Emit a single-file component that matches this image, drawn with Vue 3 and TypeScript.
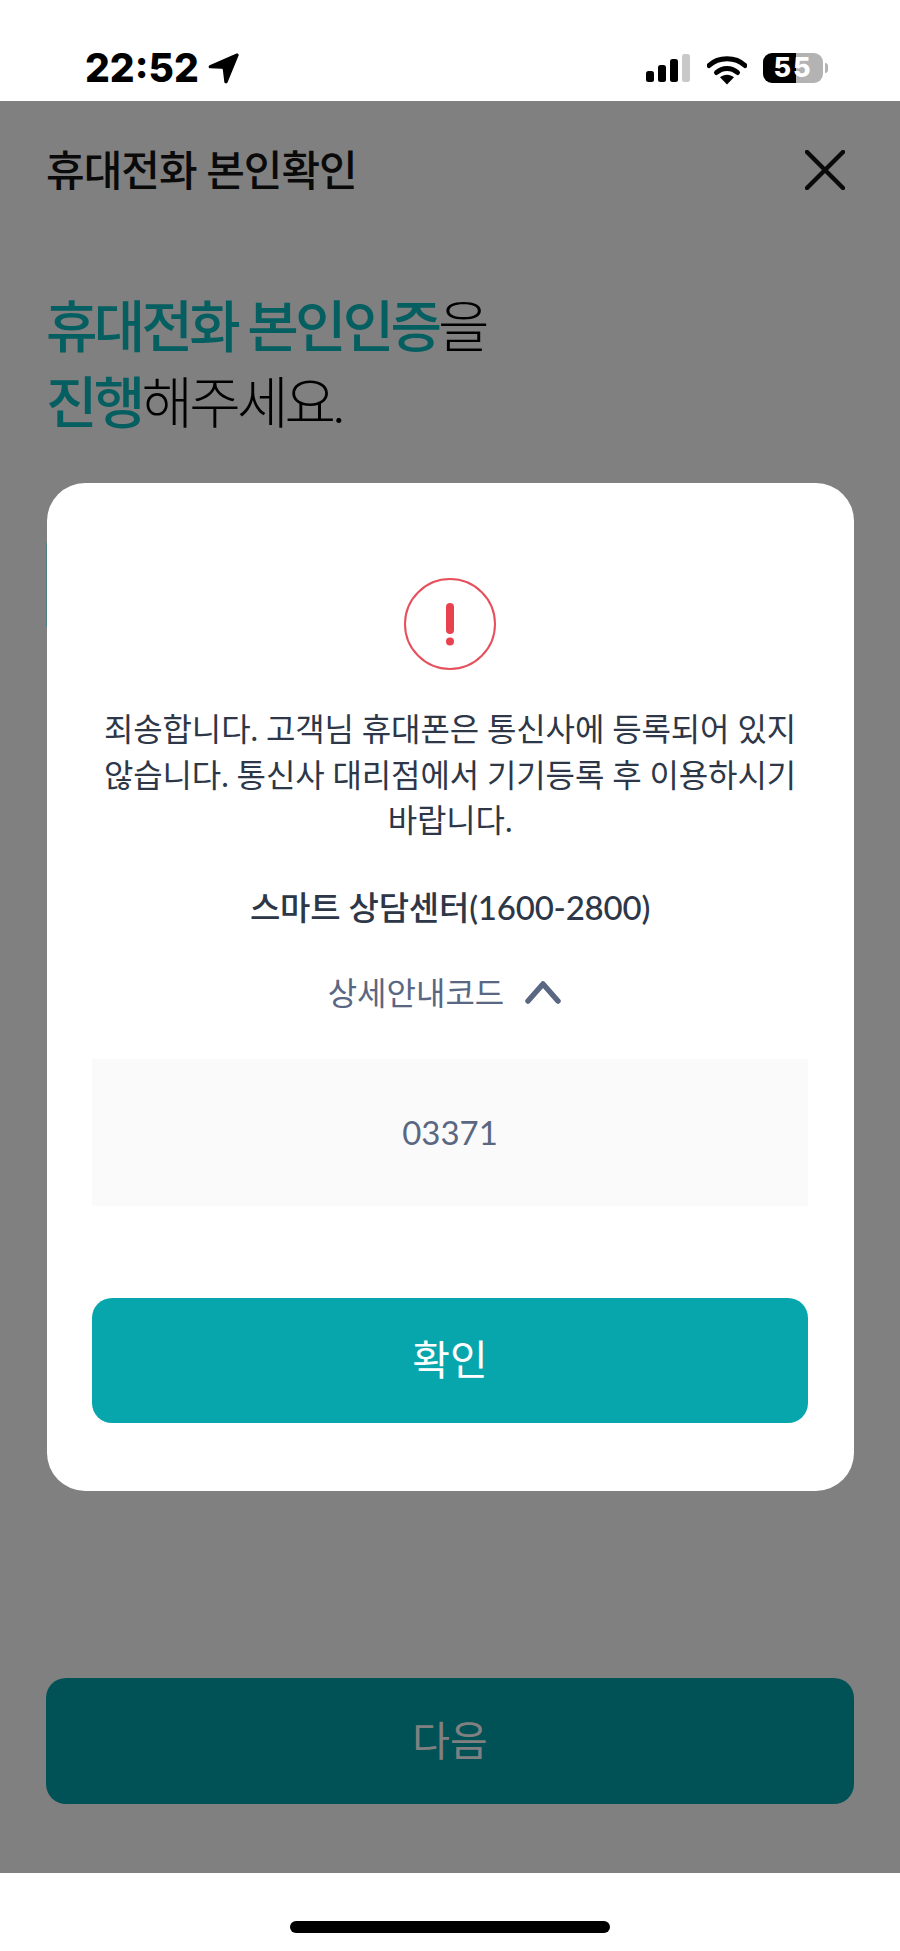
<script setup lang="ts">
const messageLines: string[] = [
  '죄송합니다. 고객님 휴대폰은 통신사에 등록되어 있지',
  '않습니다. 통신사 대리점에서 기기등록 후 이용하시기',
  '바랍니다.',
]
</script>

<template>
  <div class="screen">
    <header class="status">
      <div class="status-left">
        <span class="time">22:52</span>
        <svg class="loc" width="32" height="32" viewBox="0 0 32 32">
          <path d="M29.5 1.600 2.600 13.200c-1.600.7-1.200 3 .6 3.100l11.600.4c.5 0 .9.4 1 .9l1.500 12.300c.3 1.800 2.700 2 3.300.3L31.600 3.600c.5-1.400-.8-2.600-2.100-2z" fill="#000" />
        </svg>
      </div>
      <div class="status-right">
        <svg width="45" height="28" viewBox="0 0 45 28">
          <rect x="0" y="17" width="8" height="11" rx="2.500" fill="#000" />
          <rect x="12" y="11" width="8" height="17" rx="2.500" fill="#000" />
          <rect x="24" y="5" width="8" height="23" rx="2.500" fill="#000" />
          <rect x="36" y="0" width="8" height="28" rx="2.500" fill="#c9c9c9" />
        </svg>
        <svg class="wifi" width="40" height="30" viewBox="0 0 40 30">
          <path d="M2 10.500C11.500 1.500 28.500 1.500 38 10.500" fill="none" stroke="#000" stroke-width="5" stroke-linecap="round" />
          <path d="M9.500 17.500C15.500 12 24.500 12 30.500 17.500" fill="none" stroke="#000" stroke-width="5" stroke-linecap="round" />
          <path d="M20 29.500 13 22.300C17 18.800 23 18.800 27 22.300z" fill="#000" />
        </svg>
        <div class="battery">
          <div class="battery-body">
            <span class="battery-text">55</span>
          </div>
          <span class="battery-cap"></span>
        </div>
      </div>
    </header>

    <main class="page">
      <div class="nav">
        <h1 class="nav-title">휴대전화 본인확인</h1>
        <svg width="40" height="40" viewBox="0 0 40 40">
          <path d="M2 2 38 38M38 2 2 38" stroke="#0a0a0a" stroke-width="4.500" stroke-linecap="round" fill="none" />
        </svg>
      </div>

      <h2 class="headline">
        <span class="accent">휴대전화 본인인증</span>을<br />
        <span class="accent">진행</span>해주세요.
      </h2>

      <div class="spacer"></div>

      <div class="next-btn"><span class="btn-label">다음</span></div>

      <span class="behind-edge"></span>

      <section class="modal">
        <svg class="alert" width="92" height="92" viewBox="0 0 92 92">
          <circle cx="46" cy="46" r="45" fill="none" stroke="#e5505c" stroke-width="2" />
          <rect x="42" y="25" width="8" height="31" rx="4" fill="#e8424f" />
          <circle cx="46" cy="63.500" r="4" fill="#e8424f" />
        </svg>
        <p class="message">
          <span v-for="line in messageLines" :key="line" class="message-line">{{ line }}</span>
        </p>
        <p class="center">스마트 상담센터(1600-2800)</p>
        <div class="code-toggle">
          <span>상세안내코드</span>
          <svg width="36" height="24" viewBox="0 0 36 24">
            <path d="M3 21 18 4 33 21" fill="none" stroke="#5a6782" stroke-width="5.500" stroke-linecap="round" stroke-linejoin="round" />
          </svg>
        </div>
        <div class="code-box">03371</div>
        <div class="confirm-btn"><span class="btn-label">확인</span></div>
      </section>
    </main>

    <footer class="home">
      <span class="home-bar"></span>
    </footer>
  </div>
</template>

<style>
html,
body {
  margin: 0;
  background: #fff;
}
</style>

<style scoped>
.screen {
  width: 900px;
  height: 1951px;
  display: flex;
  flex-direction: column;
  overflow: hidden;
  background: #fff;
  font-family: "Lato", "Noto Sans CJK KR", sans-serif;
}
.status {
  height: 101px;
  flex: none;
  box-sizing: border-box;
  padding: 48px 72px 0 85px;
  display: flex;
  justify-content: space-between;
  align-items: flex-start;
}
.status-left {
  display: flex;
  align-items: center;
  gap: 8px;
}
.time {
  font-family: "Inter", sans-serif;
  font-weight: 800;
  font-size: 39px;
  line-height: 40px;
  color: #000;
}
.status-right {
  display: flex;
  align-items: center;
  gap: 17px;
  height: 40px;
}
.wifi {
  margin: 4px -1px 0 -1px;
}
.battery {
  display: flex;
  align-items: center;
  gap: 2px;
}
.battery-body {
  width: 60px;
  height: 30px;
  border-radius: 9px;
  display: flex;
  align-items: center;
  justify-content: center;
  background: linear-gradient(90deg, #000 0 33px, #b3b3b3 33px);
}
.battery-text {
  font-family: "Inter", sans-serif;
  font-weight: 800;
  font-size: 27px;
  line-height: 30px;
  color: #fff;
  letter-spacing: 2px;
}
.battery-cap {
  width: 3px;
  height: 10px;
  border-radius: 0 3px 3px 0;
  background: #b3b3b3;
}
.page {
  flex: 1;
  position: relative;
  display: flex;
  flex-direction: column;
  background: #808080;
  padding: 0 46px 69px;
}
.nav {
  height: 40px;
  margin-top: 49px;
  display: flex;
  justify-content: space-between;
  align-items: center;
  padding-right: 9px;
}
.nav-title {
  margin: 0;
  font-size: 42px;
  line-height: 40px;
  font-weight: 500;
  color: #0a0a0a;
  letter-spacing: -1px;
}
.headline {
  margin: 98px 0 0;
  font-size: 56px;
  line-height: 76px;
  font-weight: 300;
  color: #000;
  letter-spacing: -3.800px;
}
.accent {
  font-weight: 500;
  color: #055e60;
}
.spacer {
  flex: 1;
}
.next-btn {
  height: 126px;
  border-radius: 20px;
  background: #005257;
  color: #808080;
  font-size: 41px;
  display: flex;
  align-items: center;
  justify-content: center;
}
.btn-label {
  margin-bottom: 6px;
}
.behind-edge {
  position: absolute;
  left: 46px;
  top: 442px;
  width: 2px;
  height: 84px;
  background: #4d7f82;
}
.modal {
  position: absolute;
  left: 47px;
  right: 46px;
  top: 382px;
  height: 1008px;
  box-sizing: border-box;
  padding: 95px 46px 0 45px;
  border-radius: 38px;
  background: #fff;
  display: flex;
  flex-direction: column;
  align-items: center;
}
.alert {
  flex: none;
}
.message {
  margin: 36px 0 0;
  text-align: center;
  color: #2d3748;
  font-size: 32px;
  line-height: 45.500px;
  letter-spacing: -0.150px;
}
.message-line {
  display: block;
  white-space: nowrap;
}
.center {
  margin: 42px 0 0;
  font-size: 33px;
  line-height: 45px;
  font-weight: 500;
  color: #2d3748;
  letter-spacing: -0.200px;
}
.code-toggle {
  margin-top: 40px;
  margin-right: 11px;
  display: flex;
  align-items: center;
  gap: 21px;
  font-size: 32px;
  line-height: 45px;
  color: #5a6782;
}
.code-box {
  margin-top: 44px;
  align-self: stretch;
  height: 147px;
  background: #fafafa;
  color: #5a6782;
  font-size: 33px;
  display: flex;
  align-items: center;
  justify-content: center;
}
.confirm-btn {
  margin-top: 92px;
  align-self: stretch;
  height: 125px;
  border-radius: 20px;
  background: #07a6ad;
  color: #fff;
  font-size: 41px;
  display: flex;
  align-items: center;
  justify-content: center;
}
.home {
  height: 78px;
  flex: none;
  display: flex;
  justify-content: center;
  padding-top: 48px;
  box-sizing: border-box;
}
.home-bar {
  width: 320px;
  height: 12px;
  border-radius: 6px;
  background: #000;
}
</style>
